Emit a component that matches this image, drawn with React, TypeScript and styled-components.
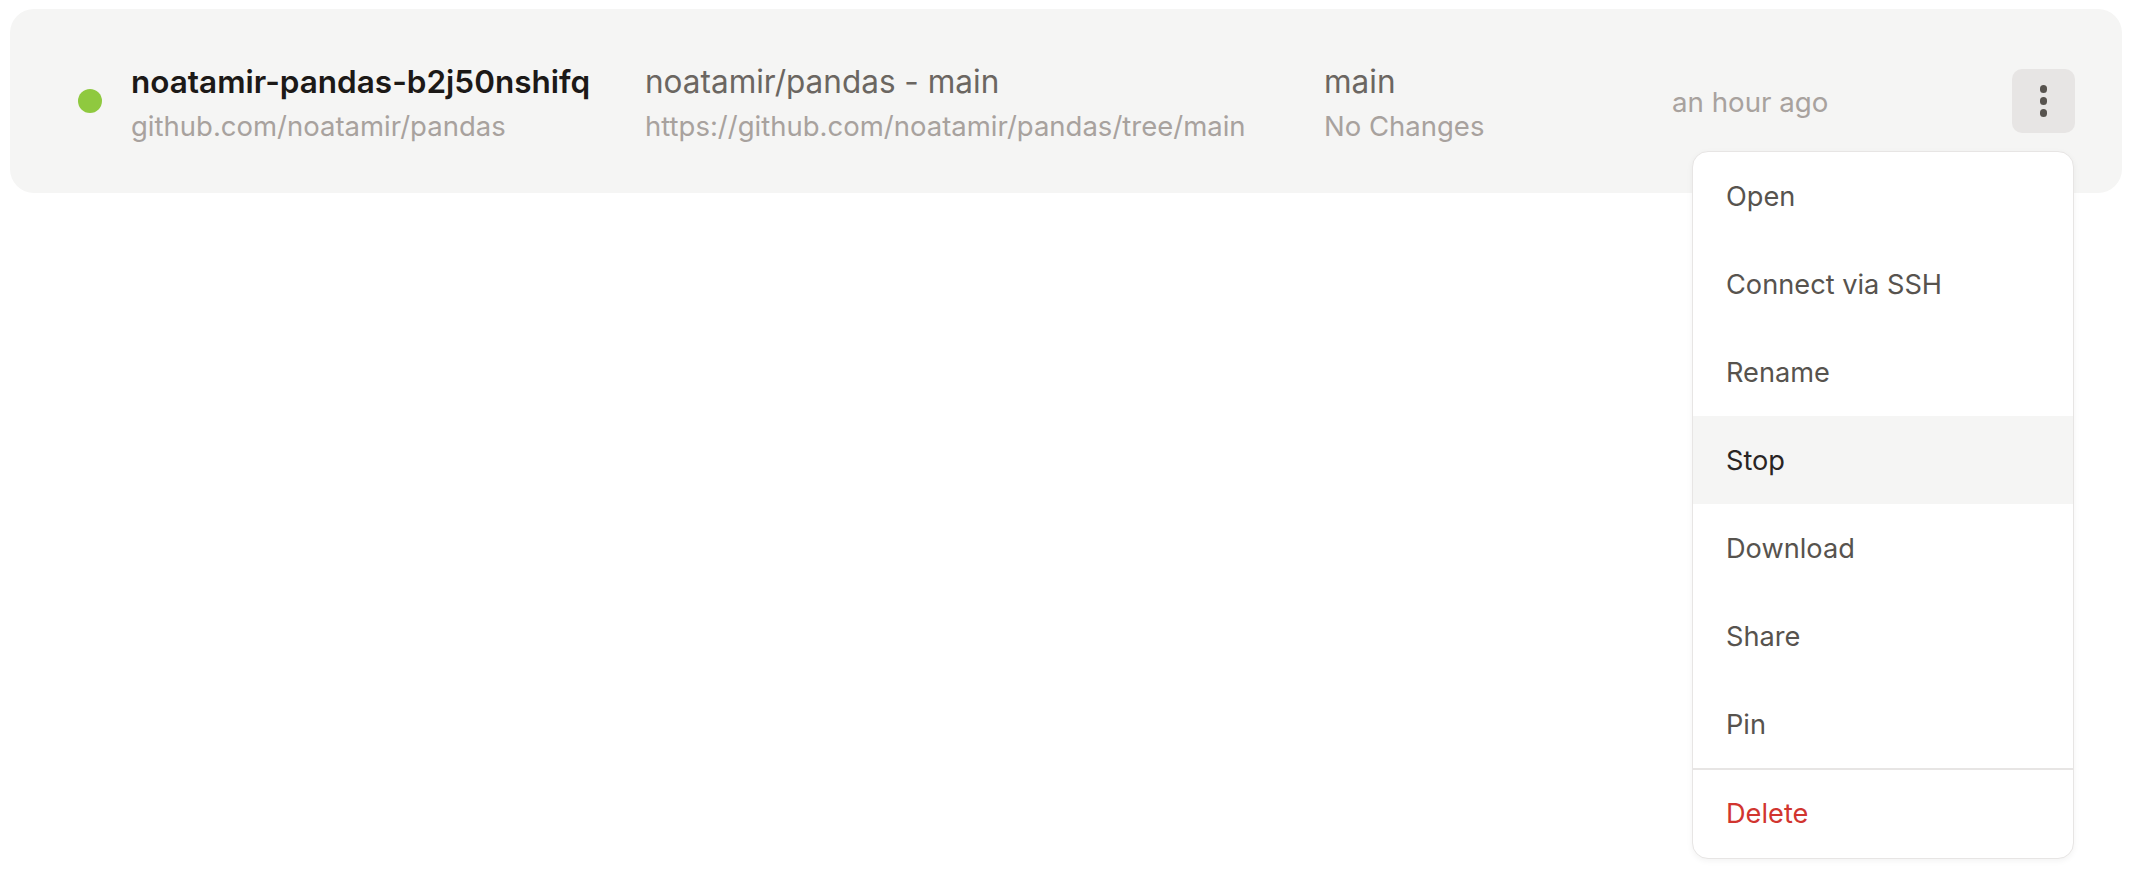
import styled, { createGlobalStyle } from 'styled-components';

const GlobalStyle = createGlobalStyle`
   html, body {
      margin: 0;
      padding: 0;
      background: #ffffff;
      font-family: Inter, "Noto Sans", "Liberation Sans", sans-serif;
   }
`;

const Page = styled.main`
   min-height: 100vh;
   box-sizing: border-box;
   padding: 9px 13px 0 10px;
`;

const Card = styled.section`
   height: 184px;
   box-sizing: border-box;
   background: #f5f5f4;
   border-radius: 24px;
   padding: 0 47px 0 68px;
   display: grid;
   grid-template-columns: 24px 543px 679px 348px 1fr 63px;
   align-items: center;
`;

const StatusDot = styled.span<{ $color: string }>`
   width: 24px;
   height: 24px;
   border-radius: 50%;
   background: ${(p) => p.$color};
`;

const Cell = styled.div<{ $indent?: boolean }>`
   display: flex;
   flex-direction: column;
   padding-top: 3.5px;
   padding-left: ${(p) => (p.$indent ? '29px' : '0')};
   min-width: 0;
`;

const Title = styled.span<{ $strong?: boolean }>`
   font-size: 31.5px;
   line-height: 40px;
   font-weight: ${(p) => (p.$strong ? 600 : 400)};
   color: ${(p) => (p.$strong ? '#1c1917' : '#6b6661')};
   white-space: nowrap;
`;

const Sub = styled.span`
   margin-top: 6.5px;
   font-size: 27.5px;
   line-height: 36px;
   color: #a8a29e;
   white-space: nowrap;
`;

const Time = styled.span`
   font-size: 27.7px;
   line-height: 36px;
   color: #a8a29e;
   padding-top: 2px;
   white-space: nowrap;
`;

const Actions = styled.div`
   position: relative;
   width: 63px;
   height: 64px;
`;

const MenuButton = styled.button`
   width: 63px;
   height: 64px;
   border: none;
   border-radius: 10px;
   background: #e7e5e4;
   display: flex;
   flex-direction: column;
   align-items: center;
   justify-content: center;
   gap: 4.5px;
   padding: 0;
   cursor: pointer;
`;

const Pip = styled.span`
   width: 7.5px;
   height: 7.5px;
   border-radius: 50%;
   background: #57534e;
`;

const Menu = styled.ul`
   position: absolute;
   top: 82px;
   right: 1px;
   width: 382px;
   box-sizing: border-box;
   margin: 0;
   padding: 0;
   list-style: none;
   background: #ffffff;
   border: 1.5px solid #e7e5e4;
   border-radius: 16px;
   box-shadow: 0 2px 6px rgba(28, 25, 23, 0.05);
   overflow: hidden;
   z-index: 10;
`;

const Item = styled.li<{ $active?: boolean; $danger?: boolean }>`
   height: 88px;
   display: flex;
   align-items: center;
   padding: 0 33px;
   font-size: 27.2px;
   color: ${(p) => (p.$danger ? '#d1352f' : p.$active ? '#292524' : '#57534e')};
   background: ${(p) => (p.$active ? '#f5f5f4' : 'transparent')};
   white-space: nowrap;
   cursor: pointer;
`;

const Divider = styled.li`
   height: 1.5px;
   background: #e7e5e4;
`;

const items = ['Open', 'Connect via SSH', 'Rename', 'Stop', 'Download', 'Share', 'Pin'];

export default function App() {
   return (
      <>
         <GlobalStyle />
         <Page>
            <Card>
               <StatusDot $color="#8fc93f" />
               <Cell $indent>
                  <Title $strong>noatamir-pandas-b2j50nshifq</Title>
                  <Sub>github.com/noatamir/pandas</Sub>
               </Cell>
               <Cell>
                  <Title>noatamir/pandas - main</Title>
                  <Sub>https://github.com/noatamir/pandas/tree/main</Sub>
               </Cell>
               <Cell>
                  <Title>main</Title>
                  <Sub>No Changes</Sub>
               </Cell>
               <Time>an hour ago</Time>
               <Actions>
                  <MenuButton aria-label="More actions">
                     <Pip />
                     <Pip />
                     <Pip />
                  </MenuButton>
                  <Menu>
                     {items.map((label) => (
                        <Item key={label} $active={label === 'Stop'}>
                           {label}
                        </Item>
                     ))}
                     <Divider />
                     <Item $danger>Delete</Item>
                  </Menu>
               </Actions>
            </Card>
         </Page>
      </>
   );
}
